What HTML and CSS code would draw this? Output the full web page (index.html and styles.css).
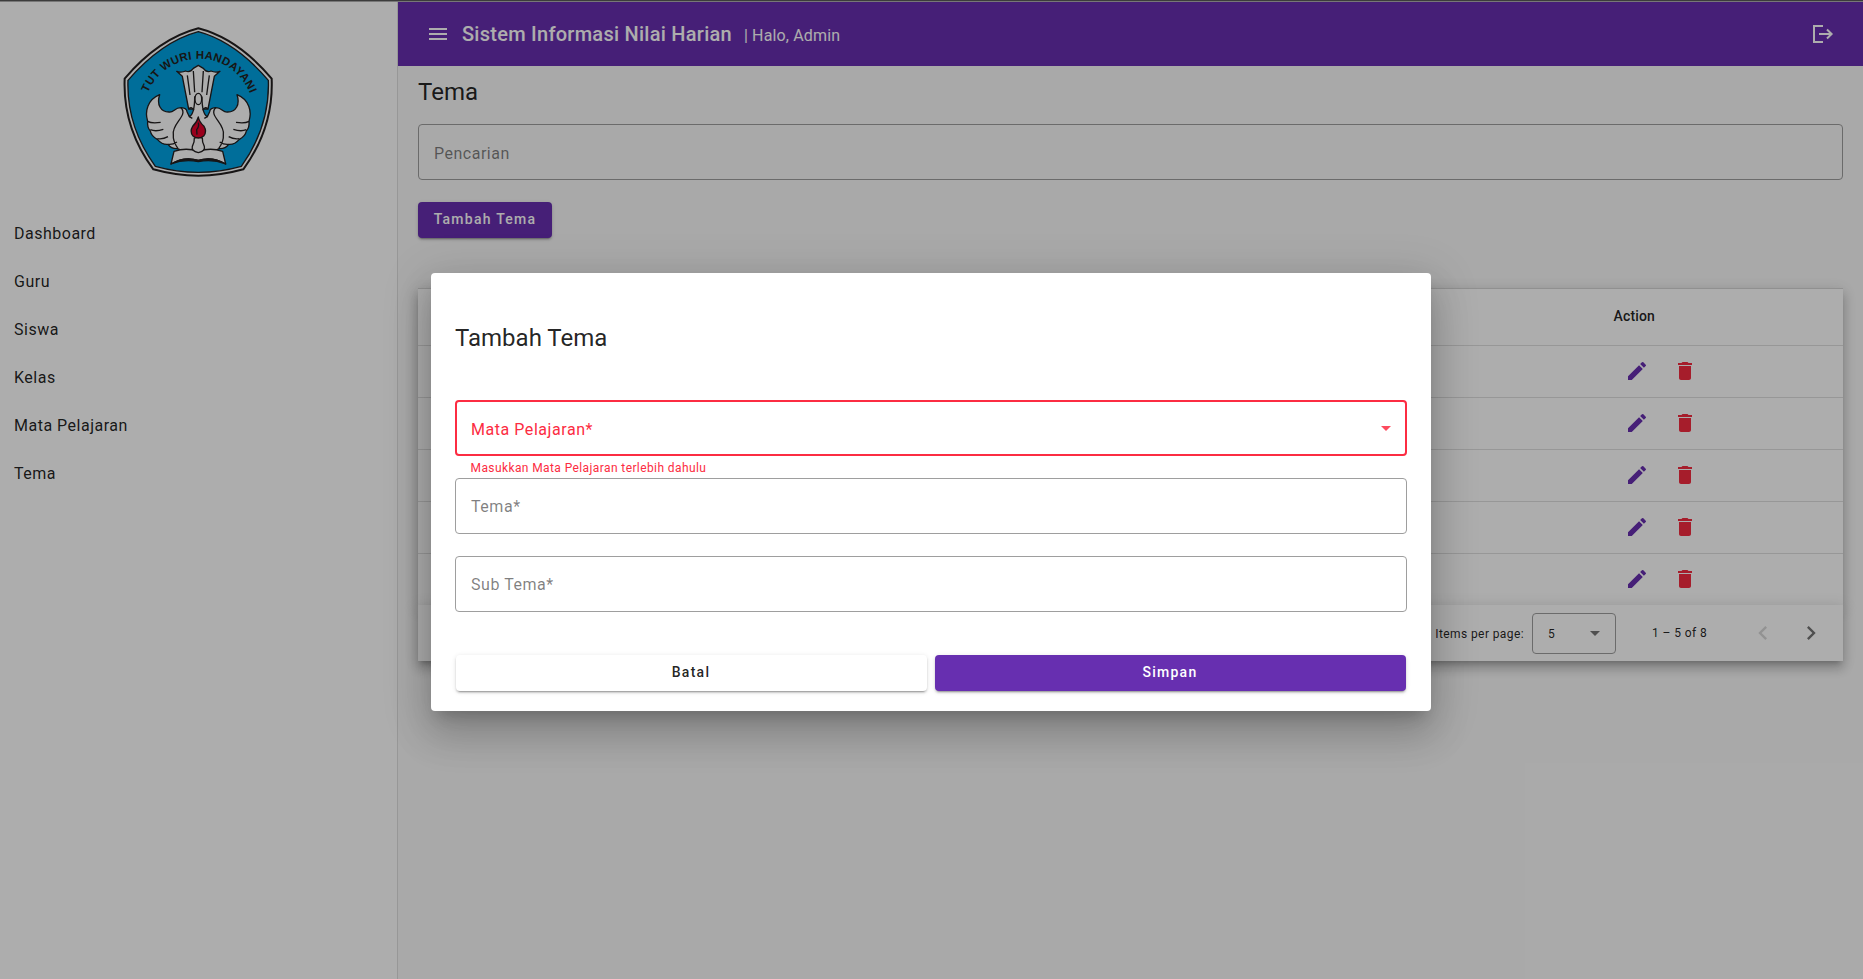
FILE: index.html
```
<!DOCTYPE html>
<html lang="id">
<head>
<meta charset="utf-8">
<title>Sistem Informasi Nilai Harian</title>
<link rel="stylesheet" href="styles.css">
</head>
<body>
<svg class="sprite" aria-hidden="true">
  <symbol id="edit" viewBox="0 0 24 24"><path d="M3 17.25V21h3.75L17.81 9.94l-3.75-3.75L3 17.25zM20.71 7.04a1 1 0 0 0 0-1.41l-2.34-2.34a1 1 0 0 0-1.41 0l-1.83 1.83 3.75 3.75 1.83-1.83z"/></symbol>
  <symbol id="trash" viewBox="0 0 24 24"><path d="M6 19c0 1.100.9 2 2 2h8c1.100 0 2-.9 2-2V7H6v12zM19 4h-3.500l-1-1h-5l-1 1H5v2h14V4z"/></symbol>
</svg>
<div class="strip"></div>
<div class="app">
  <aside class="sidebar">
    <svg class="logo" viewBox="0 0 540 510">
      <defs><path id="arc" d="M114 233 A165 165 0 0 1 420 236 L430 266"/></defs>
      <path class="badge-rim" d="M265 40Q384 71 485 191Q491 338 400 463Q265 501 130 463Q38 338 44 191Q146 71 265 40Z"/>
      <path class="badge-face" d="M265 50Q376 80 475 196Q480 334 394 454Q265 490 136 454Q49 334 54 196Q154 80 265 50Z"/>
      <text class="motto"><textPath href="#arc">TUT WURI HANDAYANI</textPath></text>
      <g class="line">
        <path d="M236 282L217 184L200 169Q214 174 227 168Q240 174 250 160L265 151L280 160Q290 174 303 168Q316 174 330 169L313 184L294 282Z"/>
        <path d="M232 181L240 240M250 168L254 232M280 168L276 232M298 181L290 240" fill="none"/>
        <path d="M149 239C112 254 104 290 113 319Q111 337 121 348Q124 364 142 373Q157 390 174 388Q184 402 202 401Q220 410 245 411H285Q310 410 328 401Q346 402 356 388Q373 390 388 373Q406 364 409 348Q419 337 417 319C426 290 418 254 381 239C391 268 378 291 353 291C337 293 338 278 317 278Q300 279 299 290L292 305Q276 297 276 246Q265 228 254 246Q254 297 238 305L231 290Q230 279 213 278C192 278 193 293 177 291C152 291 139 268 149 239Z"/>
        <path d="M113 319Q125 326 152 322M121 344Q137 351 160 343M142 371Q158 374 174 365M174 388Q187 390 201 381M417 319Q405 326 378 322M409 344Q393 351 370 343M388 371Q372 374 356 365M356 388Q343 390 329 381M213 278C236 302 184 325 190 359Q188 378 204 401M317 278C294 302 346 325 340 359Q342 378 326 401M236 282Q246 273 252 286M294 282Q284 273 278 286M238 305L247 310M292 305L283 310" fill="none"/>
        <ellipse cx="265" cy="252" rx="10" ry="17"/>
        <path d="M183 447L192 409Q231 396 265 410Q299 396 338 409L347 447Q307 423 265 436Q223 423 183 447Z"/>
        <path d="M183 447Q223 423 265 436Q307 423 347 447Q307 431 265 440Q223 431 183 447Z" fill="#231f20"/>
        <path d="M253 369Q265 365 277 369Q276 381 283 394Q287 408 265 413Q243 408 247 394Q254 381 253 369Z"/>
        <path class="flame" d="M265 306Q267 320 282 334Q292 350 281 363Q265 375 249 363Q238 350 248 334Q262 320 265 306Z"/>
        <path d="M265 323Q268 335 260 344L261 359" fill="none"/>
      </g>
    </svg>
    <nav class="nav">
      <a>Dashboard</a><a>Guru</a><a>Siswa</a><a>Kelas</a><a>Mata Pelajaran</a><a>Tema</a>
    </nav>
  </aside>
  <main class="main">
    <header class="toolbar">
      <svg class="icon" viewBox="0 0 24 24"><path d="M3 18h18v-2H3v2zm0-5h18v-2H3v2zm0-7v2h18V6H3z"/></svg>
      <span class="brand">Sistem Informasi Nilai Harian</span>
      <span class="hello">| Halo, Admin</span>
      <svg class="icon logout" viewBox="0 0 24 24"><path d="M13 4H4v16h9M9 12h12.500M17 7.500l4.600 4.500-4.600 4.500"/></svg>
    </header>
    <section class="content">
      <h1 class="title">Tema</h1>
      <div class="field"><span>Pencarian</span></div>
      <button class="btn primary add">Tambah Tema</button>
      <div class="table">
        <div class="row head"><span class="action">Action</span></div>
        <div class="row"><div class="tools"><svg class="edit"><use href="#edit"/></svg><svg class="trash"><use href="#trash"/></svg></div></div>
        <div class="row"><div class="tools"><svg class="edit"><use href="#edit"/></svg><svg class="trash"><use href="#trash"/></svg></div></div>
        <div class="row"><div class="tools"><svg class="edit"><use href="#edit"/></svg><svg class="trash"><use href="#trash"/></svg></div></div>
        <div class="row"><div class="tools"><svg class="edit"><use href="#edit"/></svg><svg class="trash"><use href="#trash"/></svg></div></div>
        <div class="row"><div class="tools"><svg class="edit"><use href="#edit"/></svg><svg class="trash"><use href="#trash"/></svg></div></div>
      </div>
      <div class="paginator">
        <span class="per-page">Items per page:</span>
        <div class="size"><span>5</span><svg class="caret" viewBox="0 0 10 5"><path d="M0 0h10L5 5z"/></svg></div>
        <span class="range">1 – 5 of 8</span>
        <svg class="page off" viewBox="0 0 24 24"><path d="M15.410 7.410L14 6l-6 6 6 6 1.410-1.410L10.830 12z"/></svg>
        <svg class="page" viewBox="0 0 24 24"><path d="M10 6L8.590 7.410 13.170 12l-4.580 4.590L10 18l6-6z"/></svg>
      </div>
    </section>
  </main>
</div>
<div class="backdrop">
  <div class="dialog">
    <h2 class="title">Tambah Tema</h2>
    <div class="field invalid"><span>Mata Pelajaran*</span><svg class="caret" viewBox="0 0 10 5"><path d="M0 0h10L5 5z"/></svg></div>
    <div class="error">Masukkan Mata Pelajaran terlebih dahulu</div>
    <div class="field"><span>Tema*</span></div>
    <div class="field sub"><span>Sub Tema*</span></div>
    <div class="actions"><button class="btn">Batal</button><button class="btn primary">Simpan</button></div>
  </div>
</div>
</body>
</html>
```
FILE: styles.css
```
* { box-sizing: border-box; }
body { margin: 0; height: 979px; overflow: hidden; font-family: Roboto, sans-serif; color: rgba(0,0,0,.87); background: #fafafa; }
.sprite { display: none; }
.strip { height: 2px; background: #3c3c3c; border-bottom: 1px solid #777; }
.app { display: flex; height: 977px; }
.sidebar { width: 398px; flex: none; background: #fff; border-right: 1px solid #dfdfdf; }
.logo { display: block; width: 180px; height: 170px; margin: 13px 0 0 110px; }
.badge-rim { fill: #fff; stroke: #231f20; stroke-width: 6; }
.badge-face { fill: #00a2e4; stroke: #231f20; stroke-width: 4; }
.motto { font: bold 34px "Liberation Sans", sans-serif; letter-spacing: 1px; fill: #231f20; }
.line { fill: #fff; stroke: #231f20; stroke-width: 4; stroke-linejoin: round; }
.line .flame { fill: #e4002b; }
.nav { display: flex; flex-direction: column; margin-top: 25px; }
.nav a { height: 48px; padding-left: 14px; line-height: 48px; font-size: 16px; letter-spacing: .5px; }
.main { flex: 1; min-width: 0; }
.toolbar { display: flex; align-items: center; height: 64px; padding: 0 29px 0 28px; background: #672fb0; color: #fff; }
.icon { width: 24px; height: 24px; fill: currentColor; }
.logout { margin-left: auto; fill: none; stroke: currentColor; stroke-width: 2; }
.brand { margin-left: 12px; font-size: 20px; font-weight: 500; letter-spacing: .26px; }
.hello { margin: 2px 0 0 12px; font-size: 16px; letter-spacing: .15px; }
.content { padding: 10px 20px 0; }
.title { margin: 0; font-size: 24px; font-weight: 400; line-height: 32px; }
.field { display: flex; align-items: center; justify-content: space-between; height: 56px; padding: 2px 15px 0; border: 1px solid #9e9e9e; border-radius: 4px; font-size: 16px; letter-spacing: .5px; color: rgba(0,0,0,.5); }
.content .field { margin-top: 16px; }
.dialog .field { padding-top: 1px; letter-spacing: .55px; }
.btn { display: block; height: 36px; padding: 0 17px 2px 16px; border: 0; border-radius: 4px; background: #fff; color: rgba(0,0,0,.87); font: 500 14px Roboto, sans-serif; letter-spacing: 1.25px; box-shadow: 0 3px 1px -2px rgba(0,0,0,.2), 0 2px 2px rgba(0,0,0,.14), 0 1px 5px rgba(0,0,0,.12); }
.primary { background: #672fb0; color: #fff; }
.add { width: 134px; margin-top: 22px; padding: 0 0 2px; }
.table, .paginator { background: #fff; box-shadow: 0 5px 5px -3px rgba(0,0,0,.2), 0 8px 10px 1px rgba(0,0,0,.14), 0 3px 14px 2px rgba(0,0,0,.12); }
.table { margin-top: 50px; border-top: 1px solid #d4d4d4; }
.row { display: flex; height: 52px; border-bottom: 1px solid #dfdfdf; }
.row.head { height: 57px; }
.row:last-child { height: 51px; border-bottom: 0; }
.action { margin: 17px 0 0 1195.5px; font-size: 14px; font-weight: 500; line-height: 20px; letter-spacing: .15px; }
.tools { display: flex; align-items: center; gap: 24px; height: 49px; margin-left: 1207px; }
.tools svg { width: 24px; height: 24px; }
.edit { fill: #672fb0; }
.trash { fill: #f52b40; }
.paginator { display: flex; align-items: center; height: 56px; padding-right: 18px; justify-content: flex-end; font-size: 12px; letter-spacing: .4px; }
.per-page { margin: 2px 8px 0 0; }
.size { display: flex; justify-content: space-between; align-items: center; width: 84px; height: 41px; padding: 1px 15px 0; border: 1px solid #9e9e9e; border-radius: 4px; }
.caret { width: 10px; height: 5px; fill: #757575; }
.range { width: 91px; margin-left: 36px; }
.page { width: 28px; height: 28px; margin-left: 20px; fill: #757575; }
.page.off { margin-left: 6px; fill: #d8d8d8; }
.backdrop { position: absolute; inset: 2px 0 0; background: rgba(0,0,0,.32); }
.dialog { width: 1000px; height: 438px; margin: 271px 0 0 431px; padding: 49px 24px 20px; border-radius: 4px; background: #fff; box-shadow: 0 11px 15px -7px rgba(0,0,0,.2), 0 24px 38px 3px rgba(0,0,0,.14), 0 9px 46px 8px rgba(0,0,0,.12); }
.dialog .title { margin-bottom: 46px; }
.dialog .invalid { border: 2px solid #fc2c42; padding: 3px 14px 0; color: #fc2c42; }
.invalid .caret { margin-top: -3px; fill: #fd4b5e; }
.error { height: 22px; padding: 3px 0 0 15.5px; font-size: 12px; line-height: 18px; letter-spacing: .4px; color: #fc2c42; }
.sub { margin-top: 22px; }
.actions { display: grid; grid-template-columns: 1fr 1fr; gap: 8px; padding: 43px 1px 0; }
```
